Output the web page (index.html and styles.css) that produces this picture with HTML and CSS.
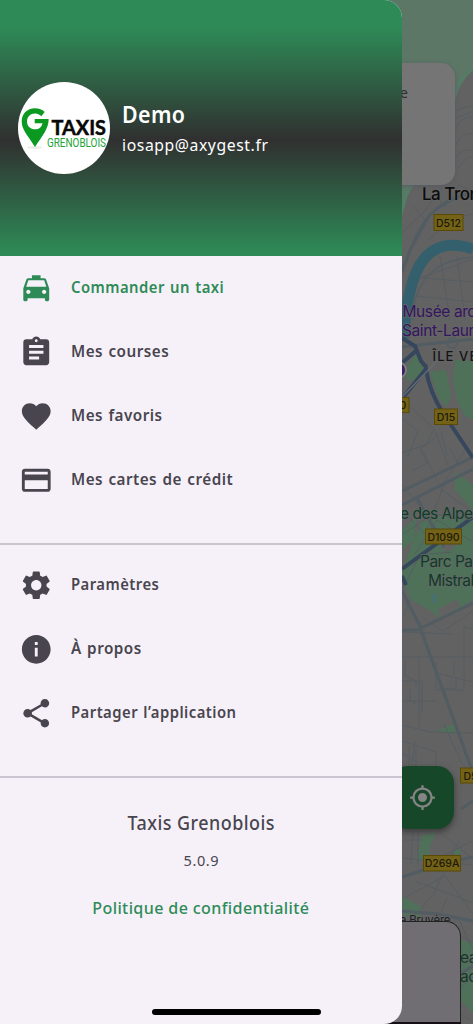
FILE: index.html
```html
<!DOCTYPE html>
<html lang="fr">
<head>
<meta charset="utf-8">
<title>Taxis Grenoblois</title>
<link rel="stylesheet" href="styles.css">
</head>
<body>
<div class="screen">
  <svg class="map" viewBox="383 0 90 1024" width="90" height="1024">
    <rect x="383" width="90" height="1024" fill="#626262"/>
    <path d="M383 0h90v70Q459 82 453 101L440 165Q415 170 400 215H383Z" fill="#5c7766"/>
    <path d="M473 69Q458 80 454 101M409 184L400 216" stroke="#547d66" stroke-width="4" fill="none"/>
    <path d="M455 101Q459 82 473 70V190H412L440 165Z" fill="#626262"/>
    <g fill="#4f7159">
      <path d="M408 364l10-12 6 20-14 10-6-7ZM455 360h18v60l-9-5-7-15-4-20ZM430 372l16-2 5 25-4 12-8-8ZM455 472l18 13v25l-18-20ZM402 530l15-13-3 23-12 9ZM421 522l20-6 32 4v80L441 619Q425 606 411 600L402 578V570Z"/>
      <path d="M435 732l18-8 3 9-18-1ZM421 836l15-4-7 17 2 12-14-1ZM454 851l7-2-1 8h-7ZM402 896l19 11v18l-19-12ZM461 940l12 3v70l-12-12Z"/>
    </g>
    <g fill="#626262"><path d="M440 546l15-12 5 8-13 10ZM437 610l20-11 3 7-18 13Z"/></g>
    <g fill="none" stroke="#565d62" stroke-width="1">
      <path d="M455 112q5-5 18-6M455 118q6-1 18-7M455 129q8-14 18-12M455 146q7-15 18-12M455 158q8-10 18-8M458 168q8-11 15-12"/>
      <path d="M402 233l23-22 13-19M412 205l15 17-14 25M433 192l12 15 14-22 14 7M428 240l25-22 20-4M413 286l10-9 50-18M440 256l10 64M457 256l8 64M423 278l50 4M417 296l56 6"/>
      <path d="M403 400l13 12 19 18 14 39M403 419l15 12-10 25M402 453l25-9 6-14M412 471l15-8-7-14 14-10M402 484l25 32 22 30M422 450l20 40 31 22M402 510l23 24 21-54 25-40M403 534l30-20 40 5M441 431l6 24M449 447l10 18"/>
      <path d="M402 590l18-35 32-3M415 554l22-34 36 22M411 598l-7 18M423 618l20 13 30-20M402 632l52 2M402 657h71M419 658v70M402 681h20v32M402 701h35M436 663v27h28v-63l9 2M454 662v14M436 673l37 9M402 725l28 7 43 1M410 688v12l6 4M405 660v16l11 5v8M439 688l17 1v-12"/>
      <path d="M402 741l34 11v18l-24-5 3-24M444 724l17 38 12 12M402 753l15 9M409 767v-21M416 770v-21M413 829l-2 35M418 829v35M404 840h18M436 829l37 30M421 866l52-25M402 858l71 7M447 863l13-24M402 899l43-23 28 38M415 881l58 22M402 929l31-34 20-42M447 898l-10 23 36 22M459 920l14 30M461 987l12-10M461 1015l12 6"/>
    </g>
    <g fill="none" stroke="#515c63" stroke-width="3">
      <path d="M402 272q12-35 25-53t46-27M402 491l69-33M402 505l71-36M417 498l27 49M402 591l19 37 52-25M402 630h19l39 107 13 36M461 809l12-8M402 877l37-12 34-8M402 911l35 3 36 7M461 973l12-7M402 347l71-8"/>
    </g>
    <path d="M404 338Q407 280 424 259T473 249" fill="none" stroke="#34606d" stroke-width="11"/>
    <path d="M413 320Q414 262 473 257" fill="none" stroke="#545e63" stroke-width="1.500"/>
    <g fill="none" stroke="#36465c" stroke-width="4">
      <path d="M402 338l13 8 6 15 5 6M402 363l15-13M402 399l24-30q3 22 17 44l30 45M402 569l71-52M402 576l4 9"/>
    </g>
    <path d="M402 397L439 359" stroke="#646c73" stroke-width="1.300" fill="none"/>
    <path d="M434 594v9" stroke="#427085" stroke-width="2"/>
    <circle cx="452" cy="343" r="5" fill="none" stroke="#545e63" stroke-width="2"/>
    <circle cx="398" cy="370" r="8" fill="#3d1f63" stroke="#7d7d7d" stroke-width="2"/>
    <g class="map-label">
      <text class="town" x="422" y="200">La Tronche</text>
      <text class="museum" x="402.500" y="317">Musée archéologique</text>
      <text class="museum" x="402" y="336">Saint-Laurent</text>
      <text class="district" x="432.500" y="360.500">ÎLE VERTE</text>
      <text class="park" x="400" y="519">e des Alpes</text>
      <text class="park" x="420" y="567">Parc Paul</text>
      <text class="park" x="428" y="585.500">Mistral</text>
      <text class="park" x="460" y="963">ean</text>
      <text class="park" x="460" y="982">ac</text>
      <text class="street" x="400" y="924">a Bruyère</text>
    </g>
    <g class="road-badge">
      <rect x="434" y="214.500" width="29" height="16"/><text x="448.500" y="226.500">D512</text>
      <rect x="386" y="397.500" width="23" height="15"/><text x="403" y="409">0</text>
      <rect x="434.500" y="409" width="23" height="15.500"/><text x="446" y="421">D15</text>
      <rect x="425.500" y="529" width="36" height="15"/><text x="443.500" y="540.500">D1090</text>
      <rect x="460.500" y="768" width="29" height="15"/><text x="476" y="779.500">D512</text>
      <rect x="423.500" y="855.500" width="37" height="15.500"/><text x="442" y="867">D269A</text>
    </g>
  </svg>

  <div class="address-card">e</div>
  <div class="locate">
    <svg viewBox="0 0 24 24" width="27" height="27"><path fill="#858585" d="M12 8c-2.210 0-4 1.790-4 4s1.790 4 4 4 4-1.790 4-4-1.790-4-4-4zm8.940 3A8.994 8.994 0 0 0 13 3.060V1h-2v2.060A8.994 8.994 0 0 0 3.060 11H1v2h2.060A8.994 8.994 0 0 0 11 20.940V23h2v-2.060A8.994 8.994 0 0 0 20.940 13H23v-2h-2.060zM12 19c-3.870 0-7-3.130-7-7s3.130-7 7-7 7 3.130 7 7-3.130 7-7 7z"/></svg>
  </div>
  <div class="bottom-sheet"></div>
  <div class="bottom-edge"></div>

  <aside class="drawer">
    <header class="profile">
      <svg class="avatar" viewBox="0 0 92 92" width="92" height="92">
        <circle cx="46" cy="46" r="46" fill="#fff"/>
        <ellipse cx="17" cy="65.500" rx="8" ry="1.500" fill="#e9eee9"/>
        <path d="M26.700 30Q23 26.300 17 26.300C9 26.300 3.700 32 3.700 39.500C3.700 48 11 55 17 65C24 54 30.700 47 30.700 37H16.700V41.300H24.500C23.500 45.500 21 47.300 17.500 47.300C12 47.300 9 44 9 39.500C9 34.500 12.500 31.500 17 31.500C20 31.500 22 33 23.300 34.300Z" fill="#0a9a22"/>
        <text class="logo-main" x="33.500" y="53" textLength="54.500" lengthAdjust="spacingAndGlyphs">TAXIS</text>
        <text class="logo-sub" x="29" y="64.700" textLength="59" lengthAdjust="spacingAndGlyphs">GRENOBLOIS</text>
      </svg>
      <div class="identity">
        <div class="name">Demo</div>
        <div class="email">iosapp@axygest.fr</div>
      </div>
    </header>

    <nav class="menu">
      <a class="item active"><svg viewBox="0 0 24 24"><path d="M18.920 6.010C18.720 5.420 18.160 5 17.500 5H15V3H9v2H6.500c-.66 0-1.210.42-1.420 1.010L3 12v8c0 .55.450 1 1 1h1c.55 0 1-.45 1-1v-1h12v1c0 .55.450 1 1 1h1c.55 0 1-.45 1-1v-8l-2.080-5.990zM6.500 16c-.83 0-1.500-.67-1.500-1.500S5.670 13 6.500 13s1.500.67 1.500 1.500S7.330 16 6.500 16zm11 0c-.83 0-1.500-.67-1.500-1.500s.67-1.500 1.500-1.500 1.500.67 1.500 1.500-.67 1.500-1.500 1.500zM5 11l1.500-4.500h11L19 11H5z"/></svg><span>Commander un taxi</span></a>
      <a class="item"><svg viewBox="0 0 24 24"><path d="M19 3h-4.180C14.400 1.840 13.300 1 12 1c-1.300 0-2.400.84-2.820 2H5c-1.100 0-2 .9-2 2v14c0 1.100.9 2 2 2h14c1.100 0 2-.9 2-2V5c0-1.100-.9-2-2-2zm-7 0c.55 0 1 .45 1 1s-.45 1-1 1-1-.45-1-1 .45-1 1-1zm2 14H7v-2h7v2zm3-4H7v-2h10v2zm0-4H7V7h10v2z"/></svg><span class="wide">Mes courses</span></a>
      <a class="item"><svg viewBox="0 0 24 24"><path d="M12 21.350l-1.450-1.320C5.400 15.360 2 12.280 2 8.500 2 5.420 4.420 3 7.500 3c1.740 0 3.410.81 4.500 2.090C13.090 3.810 14.760 3 16.500 3 19.580 3 22 5.420 22 8.500c0 3.780-3.400 6.860-8.550 11.540L12 21.350z"/></svg><span class="wide">Mes favoris</span></a>
      <a class="item"><svg viewBox="0 0 24 24"><path d="M20 4H4c-1.110 0-1.990.89-1.990 2L2 18c0 1.110.89 2 2 2h16c1.110 0 2-.89 2-2V6c0-1.110-.89-2-2-2zm0 14H4v-6h16v6zm0-10H4V6h16v2z"/></svg><span class="wide">Mes cartes de crédit</span></a>
    </nav>
    <nav class="menu second">
      <a class="item"><svg viewBox="0 0 24 24"><path d="M19.140 12.940c.04-.3.060-.61.060-.94 0-.32-.02-.64-.07-.94l2.030-1.580c.18-.14.230-.41.120-.61l-1.920-3.320c-.12-.22-.37-.29-.59-.22l-2.390.96c-.5-.38-1.030-.7-1.620-.94l-.36-2.540c-.04-.24-.24-.41-.48-.41h-3.840c-.24 0-.43.17-.47.41l-.36 2.540c-.59.24-1.130.57-1.620.94l-2.390-.96c-.22-.08-.47 0-.59.22L2.740 8.870c-.12.21-.08.47.12.61l2.030 1.580c-.05.3-.09.63-.09.94s.02.64.07.94l-2.030 1.580c-.18.14-.23.41-.12.61l1.920 3.320c.12.22.37.29.59.22l2.390-.96c.5.38 1.030.7 1.620.94l.36 2.540c.05.24.24.41.48.41h3.840c.24 0 .44-.17.470-.41l.36-2.540c.59-.24 1.130-.56 1.620-.94l2.390.96c.22.08.47 0 .59-.22l1.920-3.320c.12-.22.070-.47-.12-.61l-2.010-1.580zM12 15.600c-1.980 0-3.600-1.620-3.600-3.600s1.620-3.600 3.600-3.600 3.600 1.620 3.600 3.600-1.620 3.600-3.600 3.600z"/></svg><span>Paramètres</span></a>
      <a class="item"><svg viewBox="0 0 24 24"><path d="M12 2C6.480 2 2 6.480 2 12s4.480 10 10 10 10-4.480 10-10S17.520 2 12 2zm1 15h-2v-6h2v6zm0-8h-2V7h2v2z"/></svg><span class="wide">À propos</span></a>
      <a class="item"><svg viewBox="0 0 24 24"><path d="M18 16.080c-.76 0-1.440.3-1.960.77L8.910 12.700c.05-.23.090-.46.090-.7s-.04-.47-.09-.7l7.050-4.110c.54.5 1.250.81 2.040.81 1.660 0 3-1.340 3-3s-1.340-3-3-3-3 1.340-3 3c0 .24.040.47.090.7L8.040 9.810C7.500 9.310 6.790 9 6 9c-1.660 0-3 1.340-3 3s1.340 3 3 3c.79 0 1.500-.31 2.040-.81l7.120 4.160c-.05.21-.08.430-.08.650 0 1.610 1.310 2.920 2.920 2.920s2.920-1.310 2.920-2.920-1.310-2.920-2.920-2.920z"/></svg><span>Partager l’application</span></a>
    </nav>
    <footer class="about">
      <div class="app-name">Taxis Grenoblois</div>
      <div class="version">5.0.9</div>
      <a class="privacy">Politique de confidentialité</a>
    </footer>
  </aside>
  <div class="home-bar"></div>
</div>
</body>
</html>
```

FILE: styles.css
```css
* { box-sizing: border-box; }
body { margin: 0; background: #626262; font-family: "Noto Sans", sans-serif; }
.screen { position: relative; width: 473px; height: 1024px; overflow: hidden; }

/* Map under the drawer scrim */
.map { position: absolute; right: 0; top: 0; }
.map-label { font-family: Inter, sans-serif; paint-order: stroke; stroke: #666; stroke-width: 1.500px; }
.town { font-size: 17px; font-weight: 500; letter-spacing: -.5px; fill: #0c0c0c; }
.museum { font-size: 15.500px; letter-spacing: -.4px; fill: #351460; }
.district { font-size: 13px; font-weight: 500; letter-spacing: 1.100px; fill: #141414; }
.park { font-size: 15.500px; letter-spacing: -.5px; fill: #0b3c26; }
.street { font-size: 11.500px; letter-spacing: -.2px; fill: #1c2024; }
.road-badge rect { fill: #746216; stroke: #5b4a05; stroke-width: 1px; }
.road-badge text { font: 500 10.500px Inter, sans-serif; fill: #1c190a; text-anchor: middle; }

.address-card {
  position: absolute; left: 380px; top: 63px; width: 75px; height: 122px;
  border-radius: 14px; background: #757575; box-shadow: 0 1px 4px #565b62;
  padding: 20px 0 0 20px; font-size: 14px; color: #2b2b2b;
}
.locate {
  position: absolute; left: 391px; top: 766px; width: 63px; height: 63px;
  border-radius: 17px; background: #174729; box-shadow: 0 3px 6px #3c3c3c;
  display: flex; align-items: center; justify-content: center;
}
.bottom-sheet {
  position: absolute; left: 340px; top: 921px; width: 121px; height: 102px;
  background: #706e72; border: 1px solid #222; border-bottom: 0; border-radius: 0 15px 0 0;
}
.bottom-edge { position: absolute; left: 340px; top: 1022px; width: 121px; height: 2px; background: #160f16; }

/* Drawer */
.drawer {
  position: relative; width: 402px; height: 1024px; overflow: hidden;
  display: flex; flex-direction: column;
  background: #f6f1f9; border-radius: 0 18px 18px 0; color: #49454f;
}
.profile {
  height: 256px; flex: none; display: flex; align-items: center; gap: 12px; padding-left: 18px;
  background: linear-gradient(#2e8b57 26px, #303030 140px, #2e8b57 254px); color: #fff;
}
.avatar { flex: none; }
.logo-main { font: 700 20px Lato, sans-serif; fill: #080808; stroke: #080808; stroke-width: .5px; }
.logo-sub { font: 400 12.500px Roboto, sans-serif; fill: #20a337; }
.identity { display: flex; flex-direction: column; gap: 2px; padding-top: 1px; }
.name { font-size: 23px; line-height: 30px; font-weight: 600; letter-spacing: .4px; transform: scaleX(.93); transform-origin: left; }
.email { font-size: 16px; line-height: 28px; letter-spacing: .6px; transform: scaleX(.983); transform-origin: left; }

.menu { display: flex; flex-direction: column; padding-bottom: 31px; border-bottom: 2px solid #c9c5d0; }
.second { padding-top: 8px; }
.item { height: 64px; display: flex; align-items: center; gap: 18px; padding: 0 0 2px 18.500px; font-size: 16px; font-weight: 600; letter-spacing: .5px; word-spacing: 1px; }
.item svg { width: 34.500px; height: 34.500px; flex: none; fill: currentColor; transform: translateY(1px); }
/* Menu labels use a slightly narrowed face */
.item span { white-space: nowrap; transform: scaleX(.927); transform-origin: left; }
.item .wide { transform: scaleX(.953); }
.active { color: #2e8b57; }

.about { display: flex; flex-direction: column; align-items: center; padding-top: 30px; }
.app-name { font-size: 19.500px; line-height: 30px; font-weight: 500; letter-spacing: .5px; transform: scaleX(.92); }
.version { margin-top: 9px; font-size: 15px; line-height: 26px; letter-spacing: .6px; transform: scaleX(.97); }
.privacy { margin-top: 22px; font-size: 17px; line-height: 26px; font-weight: 500; color: #2e8b57; letter-spacing: .4px; transform: scaleX(.945); }
.home-bar { position: absolute; left: 152px; top: 1009px; width: 169px; height: 6px; border-radius: 3px; background: #000; }
```
